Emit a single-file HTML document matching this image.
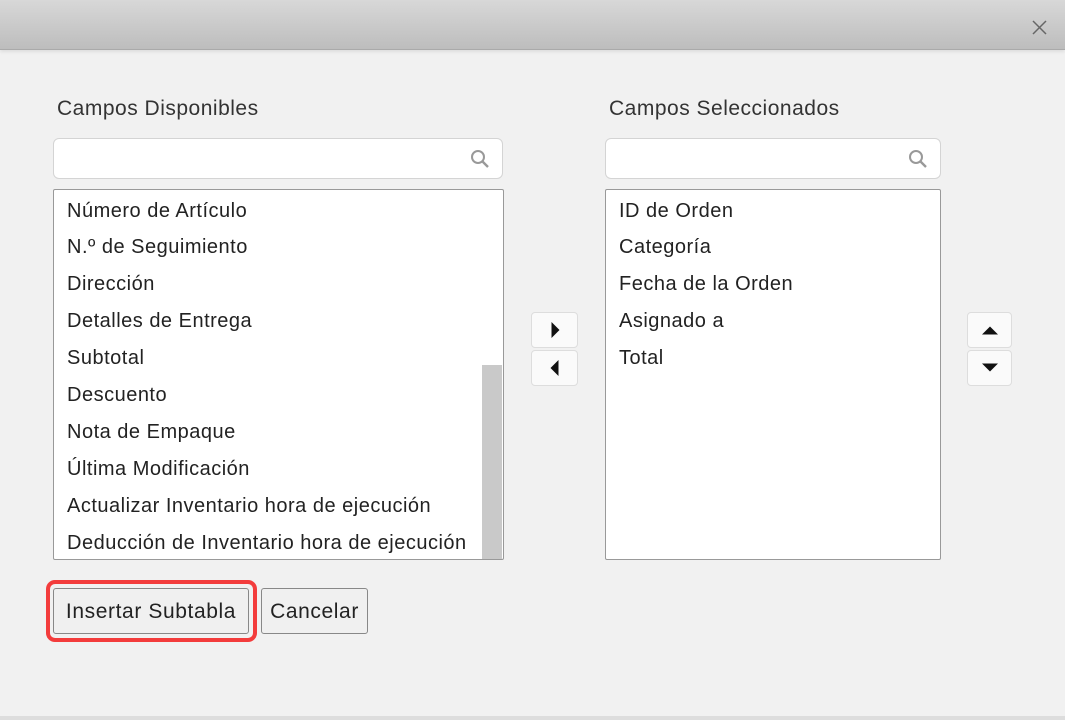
<!DOCTYPE html>
<html><head><meta charset="utf-8"><style>
*{margin:0;padding:0;box-sizing:border-box}
body{width:1065px;height:720px;background:#f1f1f1;font-family:"Liberation Sans",sans-serif;color:#222;position:relative;overflow:hidden}
.hdr{position:absolute;left:0;top:0;width:1065px;height:50px;background:linear-gradient(#d8d8d8,#bdbdbd);border-bottom:1px solid #aaa;box-shadow:0 2px 3px rgba(0,0,0,.08)}
.lbl{position:absolute;font-size:21px;letter-spacing:0.5px;color:#333;top:97px}
.srch{position:absolute;top:138px;height:41px;background:#fff;border:1px solid #d4d4d4;border-radius:6px}
.srch svg{position:absolute;right:12px;top:10px}
.list{position:absolute;top:189px;height:371px;background:#fff;border:1px solid #999;border-radius:2px;overflow:hidden}
.list div{position:absolute;left:13px;font-size:20px;letter-spacing:0.5px;white-space:nowrap;color:#222}
.thumb{position:absolute;left:428px;top:175px;width:20px;height:196px;background:#c9c9c9}
.ab{position:absolute;width:47px;height:36px;background:#fafafa;border:1px solid #ddd;border-radius:4px}
.ab svg{position:absolute;left:50%;top:50%;transform:translate(-50%,-50%)}
.btn{position:absolute;top:588px;height:46px;background:#f0f0f0;border:1px solid #888;border-radius:3px;font-size:21px;letter-spacing:0.6px;line-height:46px;text-align:center;color:#222}
.ring{position:absolute;left:46px;top:580px;width:211px;height:62px;border:4px solid #f33c3c;border-radius:9px}
</style></head><body>
<div class="hdr"><svg style="position:absolute;left:1032px;top:20px" width="15" height="15" viewBox="0 0 15 15"><path d="M1 1L14 14M14 1L1 14" stroke="#666" stroke-width="1.5"/></svg></div>
<div style="position:absolute;left:0;top:716px;width:1065px;height:4px;background:#ddd"></div>
<div class="lbl" style="left:57px">Campos Disponibles</div>
<div class="lbl" style="left:609px">Campos Seleccionados</div>
<div class="srch" style="left:53px;width:450px"><svg width="20" height="20" viewBox="0 0 20 20"><circle cx="8" cy="8" r="6" fill="none" stroke="#999" stroke-width="2"/><path d="M12 12L18 18" stroke="#999" stroke-width="2.4"/></svg></div>
<div class="srch" style="left:605px;width:336px"><svg width="20" height="20" viewBox="0 0 20 20"><circle cx="8" cy="8" r="6" fill="none" stroke="#999" stroke-width="2"/><path d="M12 12L18 18" stroke="#999" stroke-width="2.4"/></svg></div>
<div class="list" style="left:53px;width:451px">
<div style="top:10px">Número de Artículo</div>
<div style="top:46px">N.º de Seguimiento</div>
<div style="top:83px">Dirección</div>
<div style="top:120px">Detalles de Entrega</div>
<div style="top:157px">Subtotal</div>
<div style="top:194px">Descuento</div>
<div style="top:231px">Nota de Empaque</div>
<div style="top:268px">Última Modificación</div>
<div style="top:305px">Actualizar Inventario hora de ejecución</div>
<div style="top:342px">Deducción de Inventario hora de ejecución</div>
<span class="thumb"></span>
</div>
<div class="list" style="left:605px;width:336px">
<div style="top:10px">ID de Orden</div>
<div style="top:46px">Categoría</div>
<div style="top:83px">Fecha de la Orden</div>
<div style="top:120px">Asignado a</div>
<div style="top:157px">Total</div>
</div>
<div class="ab" style="left:531px;top:312px"><svg width="9" height="16" viewBox="0 0 9 16"><path d="M1 0L9 8L1 16Z" fill="#111"/></svg></div>
<div class="ab" style="left:531px;top:350px"><svg width="9" height="16" viewBox="0 0 9 16"><path d="M8 0L0 8L8 16Z" fill="#111"/></svg></div>
<div class="ab" style="left:967px;top:312px;width:45px"><svg width="16" height="9" viewBox="0 0 16 9"><path d="M0 9L8 1L16 9Z" fill="#111"/></svg></div>
<div class="ab" style="left:967px;top:350px;width:45px"><svg width="16" height="9" viewBox="0 0 16 9"><path d="M0 0L8 8L16 0Z" fill="#111"/></svg></div>
<div class="ring"></div>
<div class="btn" style="left:53px;width:196px">Insertar Subtabla</div>
<div class="btn" style="left:261px;width:107px">Cancelar</div>
</body></html>
